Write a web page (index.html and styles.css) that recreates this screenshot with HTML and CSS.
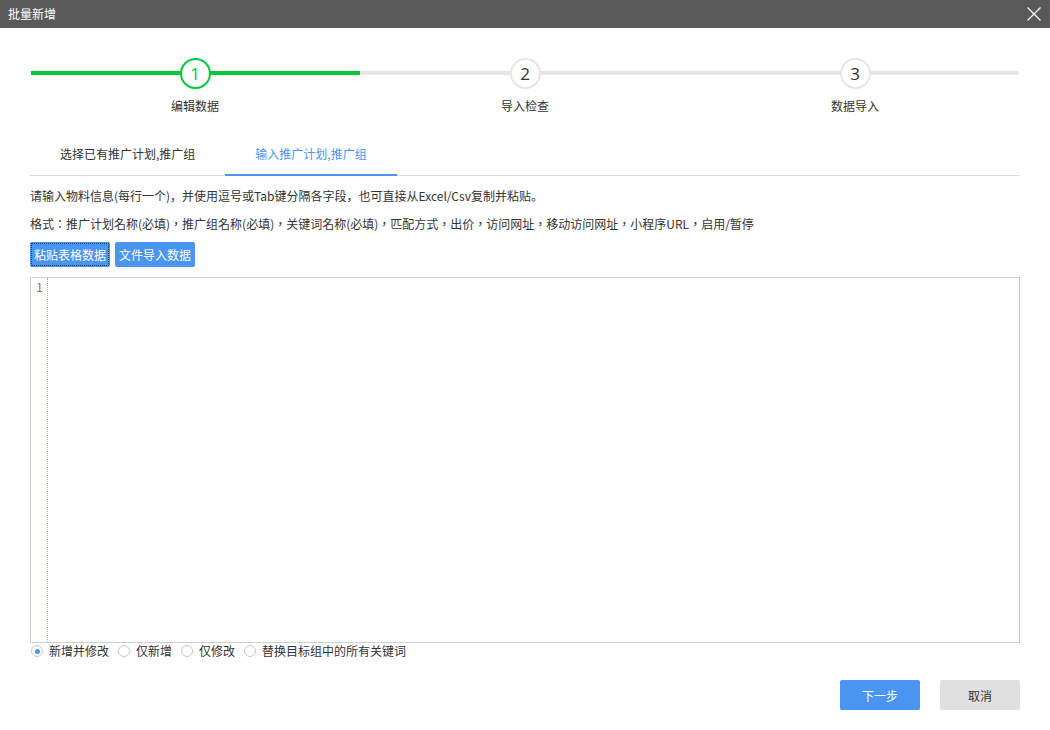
FILE: index.html
```html
<!DOCTYPE html>
<html lang="zh">
<head>
<meta charset="utf-8">
<title>批量新增</title>
<link rel="stylesheet" href="styles.css">
</head>
<body>
<div class="dialog">
  <header class="titlebar">
    <span class="title">批量新增</span>
    <span class="close" aria-label="关闭">
      <svg width="14" height="14" viewBox="0 0 14 14"><path d="M0.5 0.5 L13.5 13.5 M13.5 0.5 L0.5 13.5" stroke="#fff" stroke-width="1.2" fill="none"/></svg>
    </span>
  </header>
  <main class="body">
    <div class="steps">
      <div class="step done"><span class="circle">1</span><span class="label">编辑数据</span></div>
      <div class="step"><span class="circle">2</span><span class="label">导入检查</span></div>
      <div class="step last"><span class="circle">3</span><span class="label">数据导入</span></div>
    </div>
    <div class="tabs">
      <div class="tab">选择已有推广计划,推广组</div>
      <div class="tab active">输入推广计划,推广组</div>
    </div>
    <p class="hint">请输入物料信息(每行一个)，并使用逗号或Tab键分隔各字段，也可直接从Excel/Csv复制并粘贴。</p>
    <p class="hint format" lang="zh-Hant">格式：推广计划名称(必填)，推广组名称(必填)，关键词名称(必填)，匹配方式，出价，访问网址，移动访问网址，小程序URL，启用/暂停</p>
    <div class="tools">
      <button class="btn-sm focus">粘贴表格数据</button>
      <button class="btn-sm">文件导入数据</button>
    </div>
    <div class="editor">
      <div class="gutter"><span class="ln">1</span></div>
      <div class="code"></div>
    </div>
    <div class="radios">
      <label class="radio checked"><span class="dot"></span>新增并修改</label>
      <label class="radio"><span class="dot"></span>仅新增</label>
      <label class="radio"><span class="dot"></span>仅修改</label>
      <label class="radio"><span class="dot"></span>替换目标组中的所有关键词</label>
    </div>
    <div class="footer">
      <button class="btn primary">下一步</button>
      <button class="btn">取消</button>
    </div>
  </main>
</div>
</body>
</html>
```
FILE: styles.css
```css
html, body {
  margin: 0;
  padding: 0;
  background: #fff;
}
body {
  font-family: "Noto Sans CJK SC", "Microsoft YaHei", sans-serif;
  font-size: 12px;
  color: #333;
}
.dialog {
  width: 1050px;
  height: 730px;
  overflow: hidden;
}
.titlebar {
  height: 28px;
  background: #595959;
  display: flex;
  align-items: center;
  justify-content: space-between;
  padding: 0 9px 0 8px;
  color: #fff;
}
.title {
  font-size: 12px;
  line-height: 28px;
}
.close {
  display: flex;
  width: 14px;
  height: 14px;
  margin-top: -1px;
}
.body {
  padding: 0 30px;
}
.steps {
  display: flex;
  padding-top: 30px;
}
.step {
  flex: 1;
  display: flex;
  flex-direction: column;
  align-items: center;
  position: relative;
}
.step::before {
  content: "";
  position: absolute;
  left: 0;
  right: 0;
  top: 13px;
  height: 4px;
  background: #e6e6e6;
}
.step.done::before {
  left: 1px;
  background: #00c83e;
}
.step.last::before {
  right: 1px;
  border-radius: 0 2px 2px 0;
}
.circle {
  position: relative;
  width: 27px;
  height: 27px;
  border: 2px solid #e6e6e6;
  border-radius: 50%;
  background: #fff;
  display: flex;
  align-items: center;
  justify-content: center;
  font-size: 17px;
  font-family: "Open Sans", sans-serif;
  color: #333;
  line-height: 1;
}
.step.done .circle {
  border-color: #00c83e;
  color: #00c83e;
}
.label {
  margin-top: 8px;
  line-height: 17px;
  color: #333;
}
.tabs {
  display: flex;
  margin-top: 20px;
  border-bottom: 1px solid #dcdcdc;
}
.tab {
  padding: 0 30px;
  line-height: 40px;
  border-bottom: 2px solid transparent;
  margin-bottom: -1px;
  color: #333;
}
.tab.active {
  color: #4a95f0;
  border-bottom-color: #4a95f0;
}
.hint {
  margin: 0;
  line-height: 28px;
}
.hint:first-of-type {
  margin-top: 6px;
}
.hint.format {
  font-family: "Noto Sans CJK TC", "Noto Sans CJK SC", sans-serif;
}
.tools {
  display: flex;
  gap: 5px;
  margin-top: 4px;
}
.btn-sm {
  font-family: inherit;
  font-size: 12px;
  width: 80px;
  height: 25px;
  padding: 0;
  border: none;
  border-radius: 2px;
  background: #4a95f0;
  color: #fff;
  line-height: 25px;
}
.btn-sm.focus {
  outline: 1px dotted #1d3a66;
  outline-offset: -2px;
}
.editor {
  margin-top: 10px;
  height: 364px;
  border: 1px solid #cfcfcf;
  display: flex;
}
.gutter {
  width: 16px;
  border-right: 1px dotted #d6a88c;
  text-align: right;
}
.ln {
  display: block;
  padding-right: 4px;
  line-height: 18px;
  color: #b5663f;
  font-size: 12px;
}
.code {
  flex: 1;
}
.radios {
  display: flex;
  align-items: center;
  height: 16px;
}
.radio {
  display: flex;
  align-items: center;
  margin-right: 8px;
  line-height: 16px;
}
.dot {
  width: 10px;
  height: 10px;
  border: 1px solid #c8c8c8;
  border-radius: 50%;
  margin: 0 6px 0 1px;
  display: flex;
  align-items: center;
  justify-content: center;
  background: #fff;
}
.radio.checked .dot::after {
  content: "";
  width: 5px;
  height: 5px;
  border-radius: 50%;
  background: #4a95f0;
}
.footer {
  display: flex;
  justify-content: flex-end;
  gap: 20px;
  margin-top: 21px;
}
.btn {
  font-family: inherit;
  font-size: 12px;
  width: 80px;
  height: 30px;
  padding: 0;
  border: none;
  border-radius: 2px;
  background: #e0e0e0;
  color: #333;
}
.btn.primary {
  background: #4a95f0;
  color: #fff;
}
```
